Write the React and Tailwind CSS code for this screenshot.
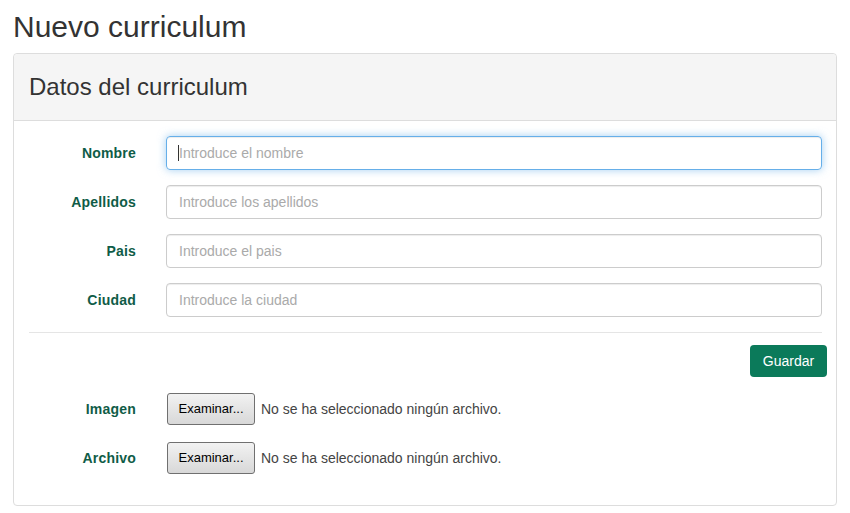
import React from "react";

const fields = [
  { label: "Nombre", placeholder: "Introduce el nombre", focused: true },
  { label: "Apellidos", placeholder: "Introduce los apellidos" },
  { label: "Pais", placeholder: "Introduce el pais" },
  { label: "Ciudad", placeholder: "Introduce la ciudad" },
];

const files = ["Imagen", "Archivo"];

const Label = ({ children }) => (
  <label className="w-[107px] shrink-0 text-right text-[14px] font-bold tracking-[0.2px] text-[#0f5c47]">
    {children}
  </label>
);

const App = () => {
  return (
    <div
      className="min-h-screen bg-white px-[13px] text-[#333]"
      style={{ fontFamily: '"Liberation Sans", Arial, sans-serif' }}
    >
      <h1 className="pt-[10px] text-[30px] leading-[33px] font-normal">Nuevo curriculum</h1>

      <div className="mt-[10px] rounded-[4px] border border-[#ddd] bg-white">
        {/* heading */}
        <div className="flex h-[67px] items-center rounded-t-[4px] border-b border-[#ddd] bg-[#f5f5f5] px-[15px]">
          <h3 className="text-[24px] leading-none">Datos del curriculum</h3>
        </div>

        <div className="pt-[15px] pb-[31px] pl-[15px] pr-[14px]">
          <form className="flex flex-col gap-[15px]">
            {fields.map((f) => (
              <div key={f.label} className="flex items-center gap-[30px]">
                <Label>{f.label}</Label>
                <div className="relative flex-1">
                  <input
                    type="text"
                    placeholder={f.placeholder}
                    className={`h-[34px] w-full rounded-[4px] border px-[12px] text-[14px] outline-none placeholder:text-[#aaa] ${
                      f.focused
                        ? "border-[#66afe9] shadow-[inset_0_1px_1px_rgba(0,0,0,0.075),0_0_8px_rgba(102,175,233,0.6)]"
                        : "border-[#ccc] shadow-[inset_0_1px_1px_rgba(0,0,0,0.075)]"
                    }`}
                  />
                  {f.focused && (
                    <span className="absolute left-[12px] top-[9px] h-[16px] w-px bg-[#333]" />
                  )}
                </div>
              </div>
            ))}
          </form>

          <hr className="mt-[15px] border-t border-[#e5e5e5]" />

          <div className="-mr-[5px] mt-[12px] flex justify-end">
            <button className="h-[32px] w-[77px] rounded-[4px] bg-[#0b7a5a] text-[14px] text-white">
              Guardar
            </button>
          </div>

          <div className="mt-[16px] flex flex-col gap-[17px]">
            {files.map((f) => (
              <div key={f} className="flex items-center gap-[30px]">
                <Label>{f}</Label>
                <div className="flex items-center gap-[6px] pl-px">
                  <span className="flex h-[32px] w-[88px] items-center justify-center rounded-[3px] border border-[#707070] bg-gradient-to-b from-[#f2f2f2] to-[#d8d8d8] text-[13px] text-black">
                    Examinar...
                  </span>
                  <span className="text-[14px] text-[#444]">No se ha seleccionado ningún archivo.</span>
                </div>
              </div>
            ))}
          </div>
        </div>
      </div>
    </div>
  );
};

export default App;
